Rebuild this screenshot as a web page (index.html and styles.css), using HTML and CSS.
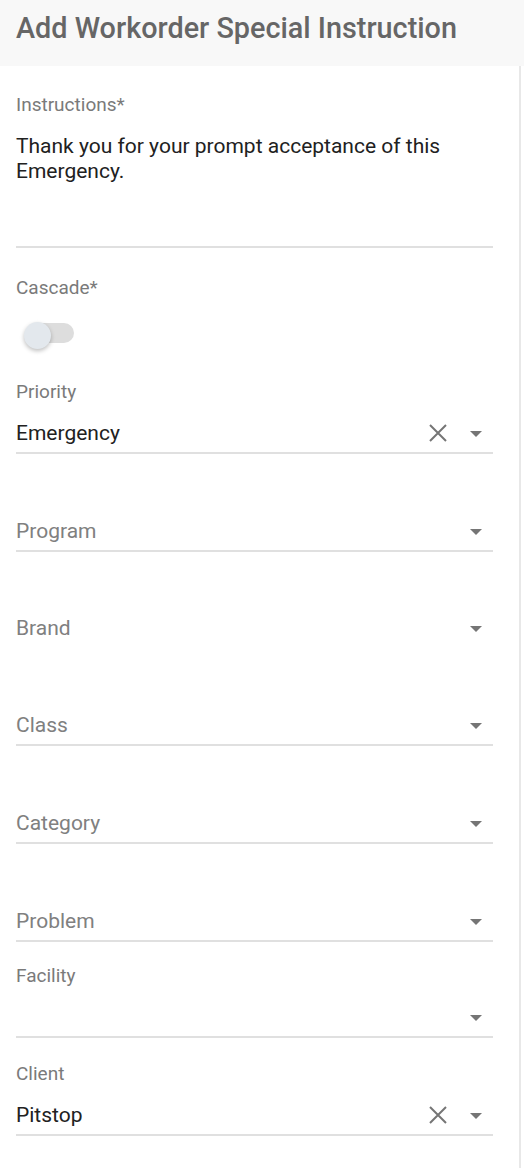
FILE: index.html
```html
<!DOCTYPE html>
<html lang="en">
<head>
    <meta charset="UTF-8">
    <meta name="viewport" content="width=device-width, initial-scale=1.0">
    <title>Add Workorder Special Instruction</title>
    <link rel="stylesheet" href="styles.css">
</head>
<body>
    <header class="header">
        <h1>Add Workorder Special Instruction</h1>
    </header>
    <main class="form">
        <div class="field field-text">
            <div class="label">Instructions*</div>
            <div class="textarea">Thank you for your prompt acceptance of this Emergency.</div>
        </div>

        <div class="field field-toggle">
            <div class="label">Cascade*</div>
            <div class="toggle"><span class="thumb"></span></div>
        </div>

        <div class="field field-select">
            <div class="label">Priority</div>
            <div class="select">
                <span class="value">Emergency</span>
                <span class="clear"><svg width="18" height="18" viewBox="0 0 18 18"><path d="M1 1 L17 17 M17 1 L1 17" stroke="#757575" stroke-width="2" fill="none"/></svg></span>
                <span class="arrow"></span>
            </div>
        </div>

        <div class="field field-plain field-wide">
            <div class="select">
                <span class="placeholder">Program</span>
                <span class="arrow"></span>
            </div>
        </div>

        <div class="field field-plain">
            <div class="select no-line">
                <span class="placeholder">Brand</span>
                <span class="arrow"></span>
            </div>
        </div>

        <div class="field field-plain">
            <div class="select">
                <span class="placeholder">Class</span>
                <span class="arrow"></span>
            </div>
        </div>

        <div class="field field-plain field-wide">
            <div class="select">
                <span class="placeholder">Category</span>
                <span class="arrow"></span>
            </div>
        </div>

        <div class="field field-plain field-wide">
            <div class="select">
                <span class="placeholder">Problem</span>
                <span class="arrow"></span>
            </div>
        </div>

        <div class="field field-select field-after">
            <div class="label">Facility</div>
            <div class="select">
                <span class="value"></span>
                <span class="arrow"></span>
            </div>
        </div>

        <div class="field field-select field-after">
            <div class="label">Client</div>
            <div class="select">
                <span class="value">Pitstop</span>
                <span class="clear"><svg width="18" height="18" viewBox="0 0 18 18"><path d="M1 1 L17 17 M17 1 L1 17" stroke="#757575" stroke-width="2" fill="none"/></svg></span>
                <span class="arrow"></span>
            </div>
        </div>
    </main>
</body>
</html>
```

FILE: styles.css
```css
* {
    margin: 0;
    padding: 0;
    box-sizing: border-box;
}

body {
    font-family: 'Roboto', 'Liberation Sans', sans-serif;
    background-color: #fff;
    color: #212121;
    width: 524px;
    height: 1168px;
    overflow: hidden;
}

/* Header */
.header {
    height: 66px;
    background-color: #f8f8f8;
    padding: 11px 16px 0;
}

.header h1 {
    font-size: 28.8px;
    line-height: 34px;
    font-weight: 500;
    color: #666;
}

/* Form */
.form {
    width: 521px;
    height: 1102px;
    border-right: 2px solid #e8e8e8;
    padding: 29px 26px 0 16px;
}

.label {
    font-size: 19px;
    line-height: 20px;
    color: #7a7a7a;
}

.field-text .textarea {
    margin-top: 19px;
    height: 114px;
    font-size: 21px;
    line-height: 25px;
    color: #212121;
    border-bottom: 2px solid #e0e0e0;
    padding-right: 30px;
}

.field-toggle {
    margin-top: 30px;
}

.toggle {
    position: relative;
    margin: 25px 0 0 10px;
    width: 48px;
    height: 20px;
    border-radius: 10px;
    background-color: #ddd;
}

.toggle .thumb {
    position: absolute;
    left: -2px;
    top: -1px;
    width: 27px;
    height: 27px;
    border-radius: 50%;
    background-color: #e3e8ed;
    box-shadow: 0 2px 4px rgba(0, 0, 0, 0.25);
}

.field-select {
    margin-top: 39px;
}

.field-select .select {
    margin-top: 13px;
}

.field-plain {
    margin-top: 58px;
}

.field-plain.field-wide {
    margin-top: 59px;
}

.field-after {
    margin-top: 24px;
}

.field-after + .field-after {
    margin-top: 26px;
}

.select {
    height: 39px;
    display: flex;
    align-items: center;
    border-bottom: 2px solid #e0e0e0;
    padding: 0 11px 1px 0;
    font-size: 21px;
}

.select.no-line {
    border-bottom-color: transparent;
}

.select .value {
    flex: 1;
    color: #212121;
}

.select .placeholder {
    flex: 1;
    color: #808080;
}

.select .clear {
    display: flex;
    margin-right: 23px;
}

.select .arrow {
    width: 0;
    height: 0;
    border-left: 6.5px solid transparent;
    border-right: 6.5px solid transparent;
    border-top: 6px solid #757575;
    margin-top: 2px;
}
```
